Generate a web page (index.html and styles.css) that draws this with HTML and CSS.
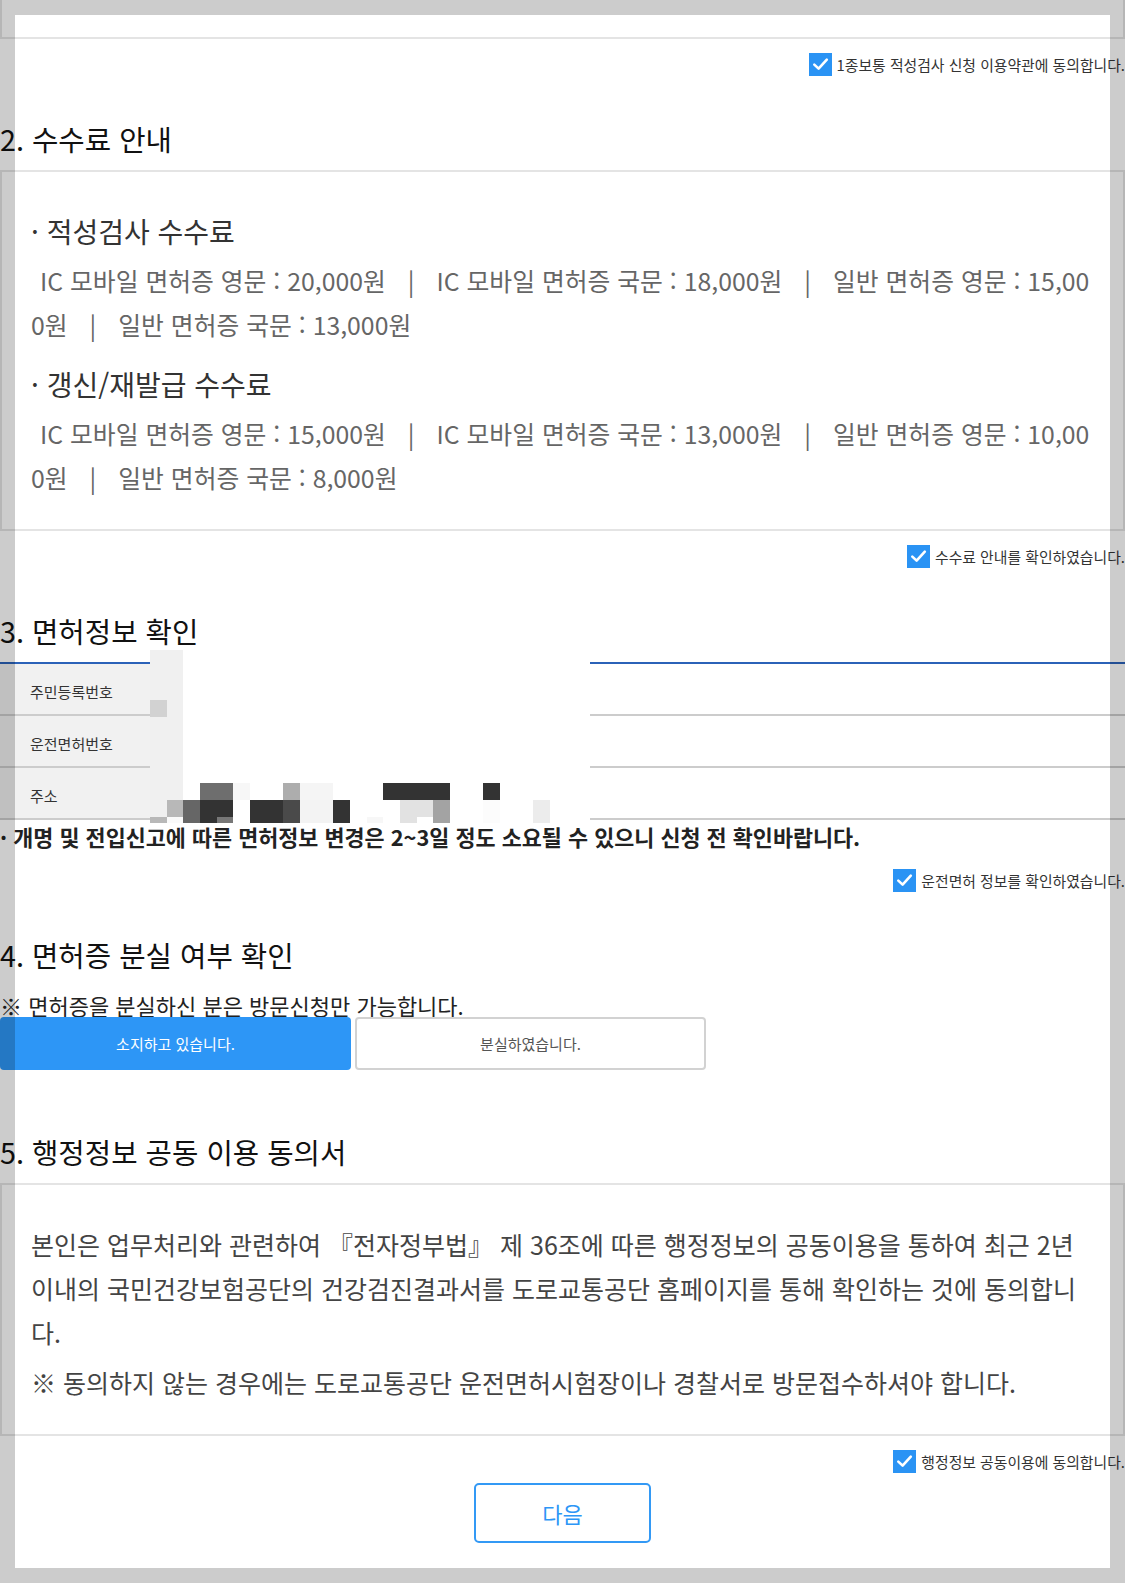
FILE: index.html
```html
<!DOCTYPE html>
<html lang="ko">
<head>
<meta charset="utf-8">
<title>적성검사 신청</title>
<link rel="stylesheet" href="styles.css">
</head>
<body>
<div class="page">
  <div class="box box-prev"></div>

  <div class="agree">
    <label class="chk"><span class="cb"><svg width="23" height="23" viewBox="0 0 23 23"><path d="M5.3 11.6 L9.6 15.6 L17.8 6.6" fill="none" stroke="#fff" stroke-width="2.6" stroke-linecap="round" stroke-linejoin="round"/></svg></span><span class="cb-text">1종보통 적성검사 신청 이용약관에 동의합니다.</span></label>
  </div>

  <h2 class="sec-title">2. 수수료 안내</h2>
  <div class="box box-fee">
    <h3 class="fee-title">· 적성검사 수수료</h3>
    <p class="fee-line">IC 모바일 면허증 영문 : 20,000원<span class="sep">|</span>IC 모바일 면허증 국문 : 18,000원<span class="sep">|</span>일반 면허증 영문 : 15,000원<span class="sep">|</span>일반 면허증 국문 : 13,000원</p>
    <h3 class="fee-title">· 갱신/재발급 수수료</h3>
    <p class="fee-line">IC 모바일 면허증 영문 : 15,000원<span class="sep">|</span>IC 모바일 면허증 국문 : 13,000원<span class="sep">|</span>일반 면허증 영문 : 10,000원<span class="sep">|</span>일반 면허증 국문 : 8,000원</p>
  </div>

  <div class="agree">
    <label class="chk"><span class="cb"><svg width="23" height="23" viewBox="0 0 23 23"><path d="M5.3 11.6 L9.6 15.6 L17.8 6.6" fill="none" stroke="#fff" stroke-width="2.6" stroke-linecap="round" stroke-linejoin="round"/></svg></span><span class="cb-text">수수료 안내를 확인하였습니다.</span></label>
  </div>

  <h2 class="sec-title">3. 면허정보 확인</h2>
  <div class="info">
    <div class="info-row"><div class="info-th">주민등록번호</div><div class="info-td"></div></div>
    <div class="info-row"><div class="info-th">운전면허번호</div><div class="info-td"></div></div>
    <div class="info-row"><div class="info-th">주소</div><div class="info-td"></div></div>
    <div class="mosaic" aria-hidden="true">
      <i style="grid-area:1/1/10/3;background:#f0f0f0"></i>
      <i style="grid-area:4/1/5/2;background:#d2d2d2"></i>
      <i style="grid-area:9/4/10/6;background:#6e6e6e"></i>
      <i style="grid-area:9/6/10/7;background:#f7f7f7"></i>
      <i style="grid-area:9/9/10/10;background:#adadad"></i>
      <i style="grid-area:9/10/10/12;background:#f5f5f5"></i>
      <i style="grid-area:9/15/10/19;background:#333"></i>
      <i style="grid-area:9/21/10/22;background:#333"></i>
      <i style="grid-area:10/1/11/2;background:#f0f0f0"></i>
      <i style="grid-area:10/2/11/3;background:#b8b8b8"></i>
      <i style="grid-area:10/3/12/4;background:#666"></i>
      <i style="grid-area:10/4/11/6;background:#333"></i>
      <i style="grid-area:10/7/12/9;background:#333"></i>
      <i style="grid-area:10/9/12/10;background:#4a4a4a"></i>
      <i style="grid-area:10/10/12/12;background:#f3f3f3"></i>
      <i style="grid-area:10/12/12/13;background:#333"></i>
      <i style="grid-area:10/16/11/18;background:#e2e2e2"></i>
      <i style="grid-area:10/18/12/19;background:#a3a3a3"></i>
      <i style="grid-area:10/21/12/22;background:#fcfcfc"></i>
      <i style="grid-area:10/24/12/25;background:#ececec"></i>
      <i style="grid-area:11/1/12/2;background:#b8b8b8"></i>
      <i style="grid-area:11/2/12/3;background:#fafafa"></i>
      <i style="grid-area:11/4/12/5;background:#333"></i>
      <i style="grid-area:11/5/12/6;background:#777"></i>
      <i style="grid-area:11/14/12/15;background:#f7f7f7"></i>
      <i style="grid-area:11/16/12/17;background:#e2e2e2"></i>
    </div>
  </div>
  <p class="warn">· 개명 및 전입신고에 따른 면허정보 변경은 2~3일 정도 소요될 수 있으니 신청 전 확인바랍니다.</p>

  <div class="agree">
    <label class="chk"><span class="cb"><svg width="23" height="23" viewBox="0 0 23 23"><path d="M5.3 11.6 L9.6 15.6 L17.8 6.6" fill="none" stroke="#fff" stroke-width="2.6" stroke-linecap="round" stroke-linejoin="round"/></svg></span><span class="cb-text">운전면허 정보를 확인하였습니다.</span></label>
  </div>

  <h2 class="sec-title">4. 면허증 분실 여부 확인</h2>
  <p class="notice">※ 면허증을 분실하신 분은 방문신청만 가능합니다.</p>
  <div class="choice">
    <button type="button" class="opt opt-on">소지하고 있습니다.</button>
    <button type="button" class="opt opt-off">분실하였습니다.</button>
  </div>

  <h2 class="sec-title sec-after-choice">5. 행정정보 공동 이용 동의서</h2>
  <div class="box box-consent">
    <p>본인은 업무처리와 관련하여 『전자정부법』 제 36조에 따른 행정정보의 공동이용을 통하여 최근 2년 이내의 국민건강보험공단의 건강검진결과서를 도로교통공단 홈페이지를 통해 확인하는 것에 동의합니다.</p>
    <p>※ 동의하지 않는 경우에는 도로교통공단 운전면허시험장이나 경찰서로 방문접수하셔야 합니다.</p>
  </div>

  <div class="agree">
    <label class="chk"><span class="cb"><svg width="23" height="23" viewBox="0 0 23 23"><path d="M5.3 11.6 L9.6 15.6 L17.8 6.6" fill="none" stroke="#fff" stroke-width="2.6" stroke-linecap="round" stroke-linejoin="round"/></svg></span><span class="cb-text">행정정보 공동이용에 동의합니다.</span></label>
  </div>

  <div class="actions">
    <button type="button" class="next">다음</button>
  </div>
</div>
<div class="frame" aria-hidden="true"></div>
</body>
</html>
```

FILE: styles.css
```css
* { box-sizing: border-box; }

html, body {
  margin: 0;
  padding: 0;
  background: #fff;
}

body {
  width: 1125px;
  height: 1583px;
  overflow: hidden;
  font-family: "Noto Sans CJK KR", "Noto Sans", sans-serif;
  color: #111;
}

.page {
  width: 1125px;
}

.box {
  border: 2px solid #e4e4e4;
}

.box-prev {
  height: 39px;
  border-top: 0;
}

/* agree checkbox rows */
.agree {
  display: flex;
  justify-content: flex-end;
  margin-top: 14px;
  height: 23px;
}

.chk {
  display: flex;
  align-items: center;
  gap: 5px;
}

.cb {
  display: block;
  flex: none;
  width: 23px;
  height: 23px;
  background: #2a93f4;
}

.cb svg { display: block; }

.cb-text {
  font-size: 14.85px;
  line-height: 23px;
  color: #333;
  white-space: nowrap;
}

/* section headings */
.sec-title {
  margin: 43px 0 11px;
  font-size: 28.7px;
  font-weight: 400;
  line-height: 40px;
  color: #111;
}

.sec-after-choice {
  margin-top: 62px;
}

/* fee box */
.box-fee {
  padding: 39px 30px 30px 29px;
}

.fee-title {
  margin: 0;
  font-size: 28px;
  font-weight: 400;
  line-height: 40px;
  color: #333;
}

.fee-line {
  margin: 8px 0 18px;
  font-size: 24.8px;
  line-height: 43.5px;
  color: #666;
  text-indent: 9px;
  word-break: break-all;
}

.fee-line:last-child {
  margin-bottom: 0;
}

.sep {
  margin: 0 22px;
}

/* license info table */
.info {
  position: relative;
  border-top: 2px solid #2b62b8;
}

.info-row {
  display: flex;
  height: 52px;
  border-bottom: 2px solid #cccccc;
}

.info-th {
  display: flex;
  align-items: center;
  width: 180px;
  padding: 4px 0 0 30px;
  background: #f1f1f1;
  font-size: 15px;
  color: #333;
}

.info-td {
  flex: 1;
}

.mosaic {
  position: absolute;
  left: 150px;
  top: -14px;
  width: 440px;
  height: 173px;
  background: #fff;
  display: grid;
  grid-template-columns: repeat(26, 16.67px) 1fr;
  grid-template-rows: repeat(10, 16.67px) 1fr;
}

.mosaic i {
  display: block;
}

.warn {
  margin: 4px 0 19px;
  font-size: 21.8px;
  font-weight: 700;
  line-height: 26px;
  color: #222;
}

/* lost license */
.notice {
  margin: 18px 0 0;
  font-size: 22px;
  line-height: 24px;
  color: #222;
}

.choice {
  display: flex;
  gap: 4px;
}

.opt {
  width: 351px;
  height: 53px;
  border-radius: 4px;
  font-family: inherit;
  font-size: 15px;
  padding: 0;
  cursor: pointer;
}

.opt-on {
  background: #2d96f6;
  border: 0;
  color: #fff;
}

.opt-off {
  background: #fff;
  border: 2px solid #d2d2d2;
  color: #555;
}

/* consent box */
.box-consent {
  padding: 37px 32px 29.5px 29px;
}

.box-consent p {
  margin: 0;
  font-size: 25px;
  line-height: 44px;
  color: #444;
}

.box-consent p + p {
  margin-top: 6px;
}

/* next button */
.actions {
  display: flex;
  justify-content: center;
  margin-top: 10px;
}

.next {
  width: 177px;
  height: 60px;
  border: 2px solid #3399f5;
  border-radius: 5px;
  background: #fff;
  color: #2d96f6;
  font-family: inherit;
  font-size: 22px;
  padding: 0;
  cursor: pointer;
}

/* dimmed frame around the viewport */
.frame {
  position: fixed;
  inset: 0;
  border: 15px solid rgba(0, 0, 0, 0.2);
  pointer-events: none;
}
```
